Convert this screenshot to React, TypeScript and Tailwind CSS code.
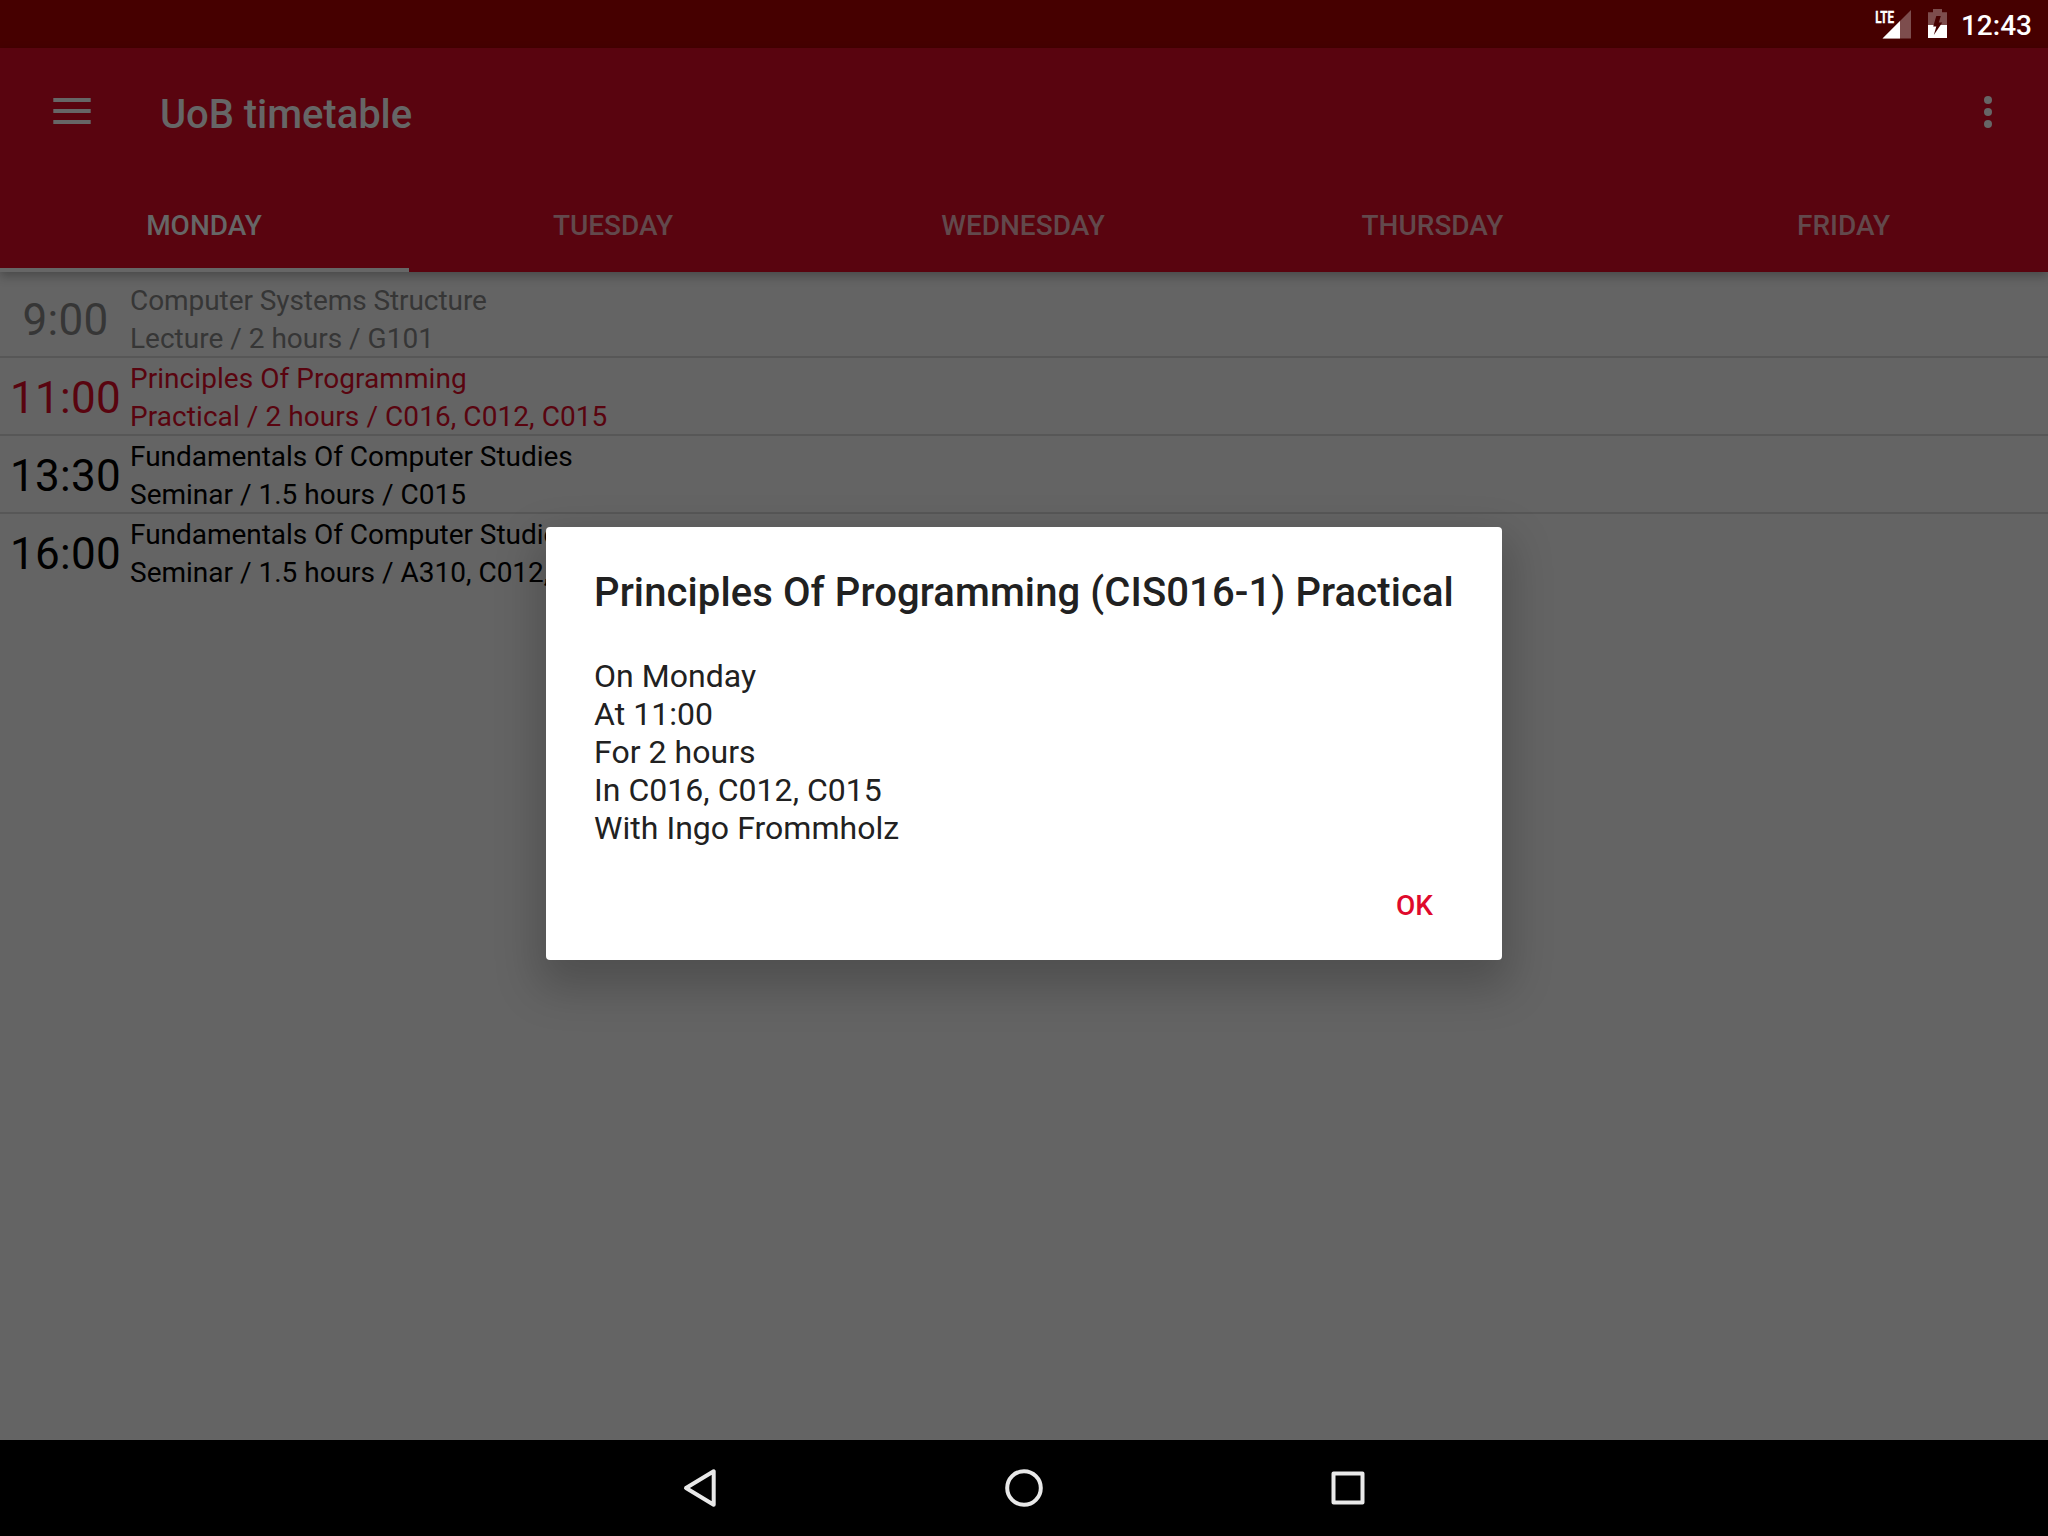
import React from "react";

const tabs = [
  { label: "MONDAY", style: "border-[#666666] pr-px text-[#666666]" },
  { label: "TUESDAY", style: "border-transparent pr-[2px] text-[#62494c]" },
  { label: "WEDNESDAY", style: "border-transparent pr-px text-[#62494c]" },
  { label: "THURSDAY", style: "border-transparent pr-px text-[#62494c]" },
  { label: "FRIDAY", style: "border-transparent pl-px text-[#62494c]" },
];

const lessons = [
  { time: "9:00", title: "Computer Systems Structure", info: "Lecture / 2 hours / G101", color: "text-[#363636]", titleGap: "tracking-[-0.07px]", infoGap: "" },
  { time: "11:00", title: "Principles Of Programming", info: "Practical / 2 hours / C016, C012, C015", color: "text-[#59040f]", titleGap: "tracking-[0.05px]", infoGap: "tracking-[0.07px]" },
  { time: "13:30", title: "Fundamentals Of Computer Studies", info: "Seminar / 1.5 hours / C015", color: "text-black", titleGap: "tracking-[-0.04px]", infoGap: "" },
  { time: "16:00", title: "Fundamentals Of Computer Studies", info: "Seminar / 1.5 hours / A310, C012, C015", color: "text-black", titleGap: "tracking-[-0.04px]", infoGap: "" },
];

const details = ["On Monday", "At 11:00", "For 2 hours", "In C016, C012, C015", "With Ingo Frommholz"];

function StatusBar() {
  return (
    <div className="flex h-12 shrink-0 items-center justify-end bg-[#460000] pr-4 text-white">
      <svg className="mr-[17px] h-12 w-[35px] overflow-visible" viewBox="0 0 35 48">
        <path d="M35 10V38.5H6.5Z" fill="#fff" fillOpacity="0.3" />
        <path d="M24 21V38.5H6.5Z" fill="#fff" />
        <text x="-0.8" y="22.5" fill="#fff" stroke="#fff" strokeWidth="0.4" fontFamily="Roboto" fontWeight="700" fontSize="17" textLength="18.8" lengthAdjust="spacingAndGlyphs">LTE</text>
      </svg>
      <svg className="mr-[14px] h-12 w-[19px]" viewBox="0 0 19 48">
        <path d="M0 12.3H5V9H14V12.3H19V25H0Z" fill="#fff" fillOpacity="0.3" />
        <path d="M0 25H19V38H0Z" fill="#fff" />
        <path d="M8.3 16H12.8L10.8 22.5H14.3L5.8 35L8.3 26.5H5.2Z" fill="#460000" />
      </svg>
      <span className="pt-[3px] text-[28px] leading-none font-medium">12:43</span>
    </div>
  );
}

function AppBar() {
  return (
    <header className="relative z-10 flex h-56 shrink-0 flex-col bg-[#59040f] text-[#666666] shadow-[0_4px_10px_rgba(0,0,0,0.28)]">
      <div className="flex h-32 items-center">
        <svg className="mb-[2px] ml-[53px] h-[26px] w-[38px]" viewBox="0 0 38 26" fill="currentColor">
          <path d="M0.3 0H37.7V4H0.3ZM0.3 11H37.7V15H0.3ZM0.3 22H37.7V26H0.3Z" />
        </svg>
        <h1 className="ml-[69px] flex-1 pt-[6px] text-[40px] leading-none font-medium tracking-[-0.06px]">UoB timetable</h1>
        <svg className="mr-14 h-8 w-2" viewBox="0 0 8 32" fill="currentColor">
          <circle cx="4" cy="4" r="4" />
          <circle cx="4" cy="16" r="4" />
          <circle cx="4" cy="28" r="4" />
        </svg>
      </div>
      <nav className="grid h-24 grid-cols-[409px_410px_409px_410px_410px]">
        {tabs.map((tab) => (
          <div
            key={tab.label}
            className={`flex items-center justify-center border-b-4 pt-[7px] text-[28px] font-medium ${tab.style}`}
          >
            {tab.label}
          </div>
        ))}
      </nav>
    </header>
  );
}

function LessonList() {
  return (
    <main className="flex-1 pt-2">
      {lessons.map((l, i) => (
        <div
          key={l.time}
          className={`flex h-[78px] items-center border-b-2 pt-[3px] ${i < lessons.length - 1 ? "border-[#575757]" : "border-transparent"} ${l.color}`}
        >
          <div className="w-[130px] pt-px pl-px text-center text-[44px] leading-none tracking-[0.3px]">{l.time}</div>
          <div className="text-[28px] leading-[38px] whitespace-nowrap">
            <div className={l.titleGap}>{l.title}</div>
            <div className={l.infoGap}>{l.info}</div>
          </div>
        </div>
      ))}
    </main>
  );
}

function LessonDialog() {
  return (
    <div className="absolute top-[527px] left-[546px] z-20 flex h-[433px] w-[956px] flex-col rounded-[4px] bg-white px-12 text-[#212121] shadow-[0_20px_44px_8px_rgba(0,0,0,0.21)]">
      <h2 className="pt-[42px] text-[40px] leading-[47px] font-medium tracking-[0.1px] whitespace-nowrap">Principles Of Programming (CIS016-1) Practical</h2>
      <div className="pt-[41px] text-[32px] leading-[38px] tracking-[0.04px]">
        {details.map((d) => (
          <div key={d}>{d}</div>
        ))}
      </div>
      <button className="mt-[42px] mr-[21px] self-end text-[28px] leading-[33px] font-medium text-[#df0a2c]">OK</button>
    </div>
  );
}

function NavigationBar() {
  return (
    <footer className="flex h-24 shrink-0 items-center justify-center gap-[276px] bg-black">
      <svg className="h-12 w-12" viewBox="0 0 48 48" fill="none" stroke="#e9e9e9" strokeWidth="4" strokeLinejoin="round">
        <path d="M37.7 7.3V40.7L10 24Z" />
      </svg>
      <svg className="h-12 w-12" viewBox="0 0 48 48" fill="none" stroke="#e9e9e9" strokeWidth="4">
        <circle cx="24" cy="24" r="16.8" />
      </svg>
      <svg className="h-12 w-12" viewBox="0 0 48 48" fill="none" stroke="#e9e9e9" strokeWidth="4" strokeLinejoin="round">
        <path d="M9.5 9.5H38.5V38.5H9.5Z" />
      </svg>
    </footer>
  );
}

export default function App() {
  return (
    <div className="relative flex h-[1536px] w-[2048px] flex-col overflow-hidden bg-[#646464] font-['Roboto',sans-serif]">
      <StatusBar />
      <AppBar />
      <LessonList />
      <NavigationBar />
      <LessonDialog />
    </div>
  );
}
